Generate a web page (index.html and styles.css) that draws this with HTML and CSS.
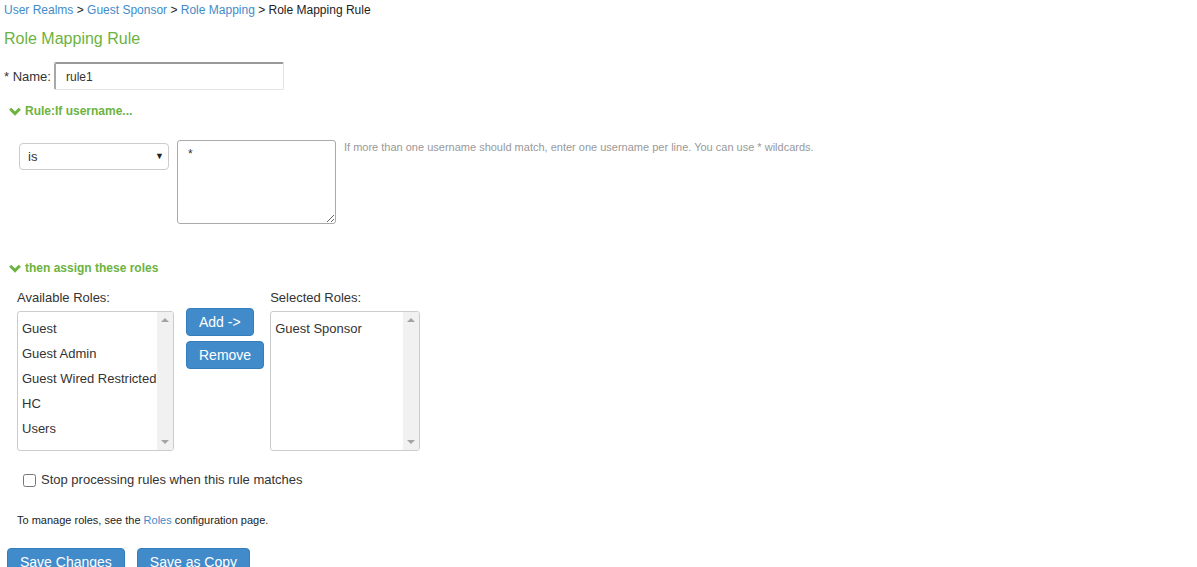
FILE: index.html
```html
<!DOCTYPE html>
<html lang="en">
<head>
    <meta charset="UTF-8">
    <title>Role Mapping Rule</title>
    <link rel="stylesheet" href="styles.css">
</head>
<body>
    <div class="breadcrumb">
        <a href="#">User Realms</a> &gt; <a href="#">Guest Sponsor</a> &gt; <a href="#">Role Mapping</a> &gt; <span>Role Mapping Rule</span>
    </div>

    <h2 class="title">Role Mapping Rule</h2>

    <div class="name-row">
        <label for="name">* Name:</label>
        <input type="text" id="name" class="name-input" value="rule1">
    </div>

    <div class="section-head">
        <svg class="chevron" width="12" height="9" viewBox="0 0 12 9"><path d="M1.2 1.8 L6 6.6 L10.8 1.8" fill="none" stroke="#6cb33f" stroke-width="3"/></svg>
        Rule:If username...
    </div>

    <div class="match-row">
        <div class="select-wrap">
            <select class="op-select">
                <option>is</option>
                <option>is not</option>
            </select>
        </div>
        <textarea class="names">*</textarea>
        <div class="help">If more than one username should match, enter one username per line. You can use * wildcards.</div>
    </div>

    <div class="section-head section-roles">
        <svg class="chevron" width="12" height="9" viewBox="0 0 12 9"><path d="M1.2 1.8 L6 6.6 L10.8 1.8" fill="none" stroke="#6cb33f" stroke-width="3"/></svg>
        then assign these roles
    </div>

    <div class="roles">
        <div class="role-col">
            <div class="role-label">Available Roles:</div>
            <div class="listbox available">
                <ul class="options">
                    <li>Guest</li>
                    <li>Guest Admin</li>
                    <li>Guest Wired Restricted</li>
                    <li>HC</li>
                    <li>Users</li>
                </ul>
                <div class="scrollbar"><span class="arrow up"></span><span class="arrow down"></span></div>
            </div>
        </div>
        <div class="move-buttons">
            <button class="btn">Add -&gt;</button>
            <button class="btn">Remove</button>
        </div>
        <div class="role-col">
            <div class="role-label">Selected Roles:</div>
            <div class="listbox selected">
                <ul class="options">
                    <li>Guest Sponsor</li>
                </ul>
                <div class="scrollbar"><span class="arrow up"></span><span class="arrow down"></span></div>
            </div>
        </div>
    </div>

    <div class="stop-row">
        <input type="checkbox" id="stop">
        <label for="stop">Stop processing rules when this rule matches</label>
    </div>

    <p class="manage">To manage roles, see the <a href="#">Roles</a> configuration page.</p>

    <div class="save-row">
        <button class="btn">Save Changes</button>
        <button class="btn">Save as Copy</button>
    </div>
</body>
</html>
```

FILE: styles.css
```css
body {
    font-family: "Liberation Sans", Arial, sans-serif;
    font-size: 13px;
    color: #333;
    background-color: #fff;
    margin: 0;
    overflow: hidden;
}

a {
    color: #428bca;
    text-decoration: none;
}

.breadcrumb {
    font-size: 12px;
    line-height: 16px;
    padding: 2px 0 0 4px;
    color: #222;
}

.title {
    font-size: 16px;
    font-weight: normal;
    line-height: 20px;
    color: #6cb33f;
    margin: 11px 0 0 4px;
}

.name-row {
    display: flex;
    align-items: center;
    gap: 3px;
    margin: 13px 0 0 4px;
}

.name-input {
    box-sizing: border-box;
    width: 230px;
    height: 28px;
    padding: 0 10px;
    font-family: inherit;
    font-size: 12px;
    color: #333;
    border: 1px solid #e3e3e3;
    border-top: 2px solid #999;
    border-left: 2px solid #a8a8a8;
    border-radius: 2px;
    outline: none;
}

.section-head {
    display: flex;
    align-items: center;
    gap: 4px;
    font-size: 12px;
    font-weight: bold;
    line-height: 16px;
    color: #6cb33f;
    margin: 13px 0 0 9px;
}

.section-roles {
    margin-top: 36px;
}

.match-row {
    display: flex;
    align-items: flex-start;
    gap: 8px;
    margin: 21px 0 0 19px;
}

.select-wrap {
    position: relative;
    margin-top: 3px;
}

.select-wrap::after {
    content: "\25BC";
    position: absolute;
    right: 5px;
    top: 8px;
    font-size: 9px;
    color: #222;
    pointer-events: none;
}

.op-select {
    appearance: none;
    box-sizing: border-box;
    width: 150px;
    height: 27px;
    padding: 0 8px;
    font-family: inherit;
    font-size: 13px;
    color: #333;
    background: #fff;
    border: 1px solid #ccc;
    border-radius: 4px;
}

.names {
    box-sizing: border-box;
    width: 159px;
    height: 84px;
    padding: 6px 10px;
    font-family: inherit;
    font-size: 12px;
    color: #333;
    border: 1px solid #aaa;
    border-radius: 3px;
}

.help {
    font-size: 11px;
    line-height: 14px;
    color: #999;
}

.roles {
    display: flex;
    align-items: flex-start;
    margin: 14px 0 0 17px;
}

.role-label {
    line-height: 16px;
    margin-bottom: 5px;
}

.listbox {
    box-sizing: border-box;
    display: flex;
    height: 140px;
    border: 1px solid #ccc;
    border-radius: 3px;
    overflow: hidden;
}

.available {
    width: 157px;
}

.selected {
    width: 150px;
}

.options {
    flex: 1;
    list-style: none;
    margin: 0;
    padding: 4px 0 0 4px;
    white-space: nowrap;
    overflow: hidden;
}

.options li {
    line-height: 25px;
}

.scrollbar {
    width: 16px;
    background: #f1f1f1;
    display: flex;
    flex-direction: column;
    justify-content: space-between;
    align-items: center;
    padding: 6px 0;
}

.arrow {
    width: 0;
    height: 0;
    border-left: 4px solid transparent;
    border-right: 4px solid transparent;
}

.arrow.up {
    border-bottom: 4px solid #a3a3a3;
}

.arrow.down {
    border-top: 4px solid #a3a3a3;
}

.move-buttons {
    display: flex;
    flex-direction: column;
    align-items: flex-start;
    gap: 5px;
    padding-top: 18px;
    margin: 0 6px 0 12px;
}

.btn {
    box-sizing: border-box;
    height: 28px;
    padding: 0 12px;
    font-family: inherit;
    font-size: 14px;
    color: #fff;
    background-color: #428bca;
    border: 1px solid #357ebd;
    border-radius: 4px;
    cursor: pointer;
}

.stop-row {
    display: flex;
    align-items: center;
    gap: 5px;
    line-height: 16px;
    margin: 21px 0 0 23px;
}

.stop-row input {
    margin: 0;
    width: 13px;
    height: 13px;
}

.manage {
    font-size: 11px;
    line-height: 14px;
    color: #222;
    margin: 25px 0 0 17px;
}

.save-row {
    display: flex;
    gap: 12px;
    margin: 21px 0 0 7px;
}
```
